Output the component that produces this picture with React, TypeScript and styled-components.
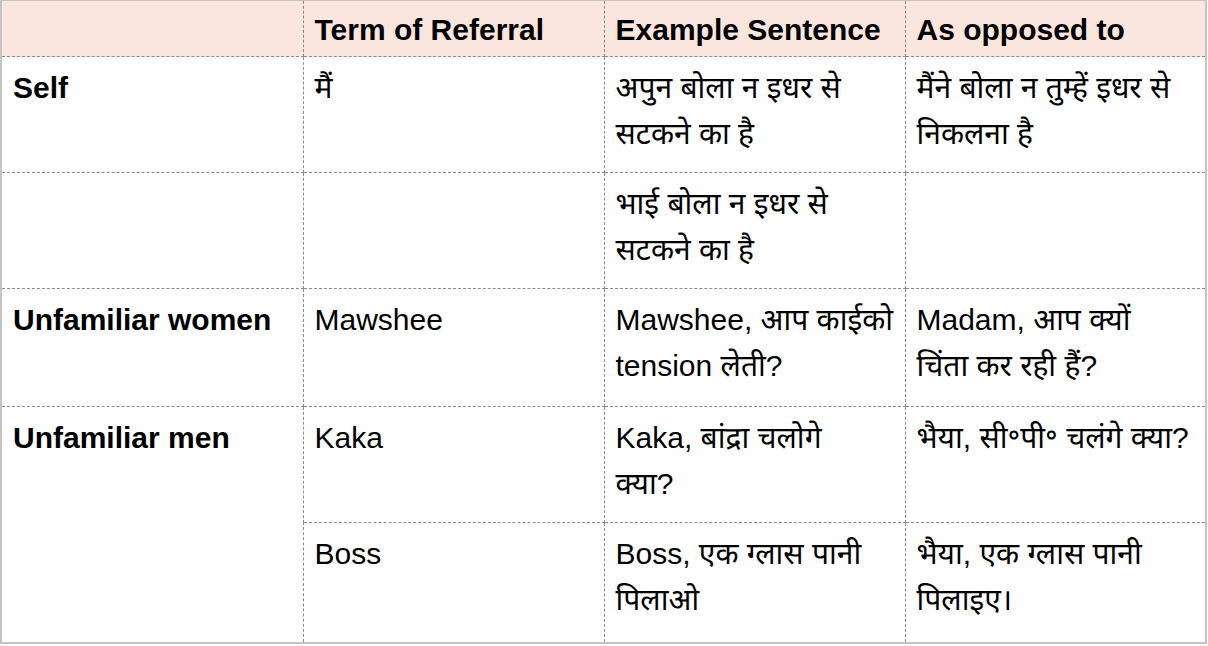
import * as React from 'react';
import styled, { createGlobalStyle } from 'styled-components';

const GlobalStyle = createGlobalStyle`
	html, body {
		margin: 0;
		padding: 0;
		background: #ffffff;
	}
	body {
		font-family: "Liberation Sans", "Noto Sans Devanagari", "Lohit Devanagari", "Noto Sans", sans-serif;
		color: #000000;
	}
`;

const Table = styled.table`
	width: 1207px;
	border-collapse: collapse;
	table-layout: fixed;
	border-top: 1px solid #c4c4c4;
	border-left: 2px solid #c4c4c4;
	border-right: 2px solid #c4c4c4;
	border-bottom: 2px solid #c4c4c4;
	font-size: 30px;
	line-height: 46px;
`;

const Col = styled.col<{ $width: number }>`
	width: ${props => props.$width}px;
`;

const HeadRow = styled.tr`
	background: #fae6df;
	height: 56px;
`;

const Row = styled.tr<{ $height: number }>`
	height: ${props => props.$height}px;
`;

const HeadCell = styled.th`
	text-align: left;
	vertical-align: top;
	font-weight: 700;
	padding: 6px 11px 0;
	white-space: nowrap;
	border-right: 1px dashed #8c8c8c;
	border-bottom: 1px dashed #8c8c8c;
	&:last-child {
		border-right: none;
	}
`;

const Cell = styled.td<{ $bold?: boolean }>`
	vertical-align: top;
	font-weight: ${props => (props.$bold ? 700 : 400)};
	padding: 8px 11px 0;
	border-right: 1px dashed #8c8c8c;
	border-bottom: 1px dashed #8c8c8c;
	&:last-child {
		border-right: none;
	}
	tr:last-child > & {
		border-bottom: none;
	}
`;

const Line = styled.span`
	display: block;
	white-space: nowrap;
`;

type Entry = {
	label?: string;
	span?: number;
	term: string;
	example: string[];
	opposed: string[];
	height: number;
};

const rows: Entry[] = [
	{ label: 'Self', term: 'मैं', example: ['अपुन बोला न इधर से', 'सटकने का है'], opposed: ['मैंने बोला न तुम्हें इधर से', 'निकलना है'], height: 116 },
	{ label: '', term: '', example: ['भाई बोला न इधर से', 'सटकने का है'], opposed: [], height: 116 },
	{ label: 'Unfamiliar women', term: 'Mawshee', example: ['Mawshee, आप काईको', 'tension लेती?'], opposed: ['Madam, आप क्यों', 'चिंता कर रही हैं?'], height: 118 },
	{ label: 'Unfamiliar men', span: 2, term: 'Kaka', example: ['Kaka, बांद्रा चलोगे', 'क्या?'], opposed: ['भैया, सी॰पी॰ चलंगे क्या?'], height: 116 },
	{ term: 'Boss', example: ['Boss, एक ग्लास पानी', 'पिलाओ'], opposed: ['भैया, एक ग्लास पानी', 'पिलाइए।'], height: 120 },
];

const Lines = ({ items }: { items: string[] }) => (
	<>
		{items.map((t, i) => (
			<Line key={i}>{t}</Line>
		))}
	</>
);

export default function App() {
	return (
		<>
			<GlobalStyle />
			<Table>
				<colgroup>
					<Col $width={302} />
					<Col $width={301} />
					<Col $width={301} />
					<Col $width={301} />
				</colgroup>
				<thead>
					<HeadRow>
						<HeadCell></HeadCell>
						<HeadCell>Term of Referral</HeadCell>
						<HeadCell>Example Sentence</HeadCell>
						<HeadCell>As opposed to</HeadCell>
					</HeadRow>
				</thead>
				<tbody>
					{rows.map((r, i) => (
						<Row key={i} $height={r.height}>
							{r.label !== undefined && (
								<Cell $bold rowSpan={r.span}>{r.label}</Cell>
							)}
							<Cell>{r.term}</Cell>
							<Cell><Lines items={r.example} /></Cell>
							<Cell><Lines items={r.opposed} /></Cell>
						</Row>
					))}
				</tbody>
			</Table>
		</>
	);
}
